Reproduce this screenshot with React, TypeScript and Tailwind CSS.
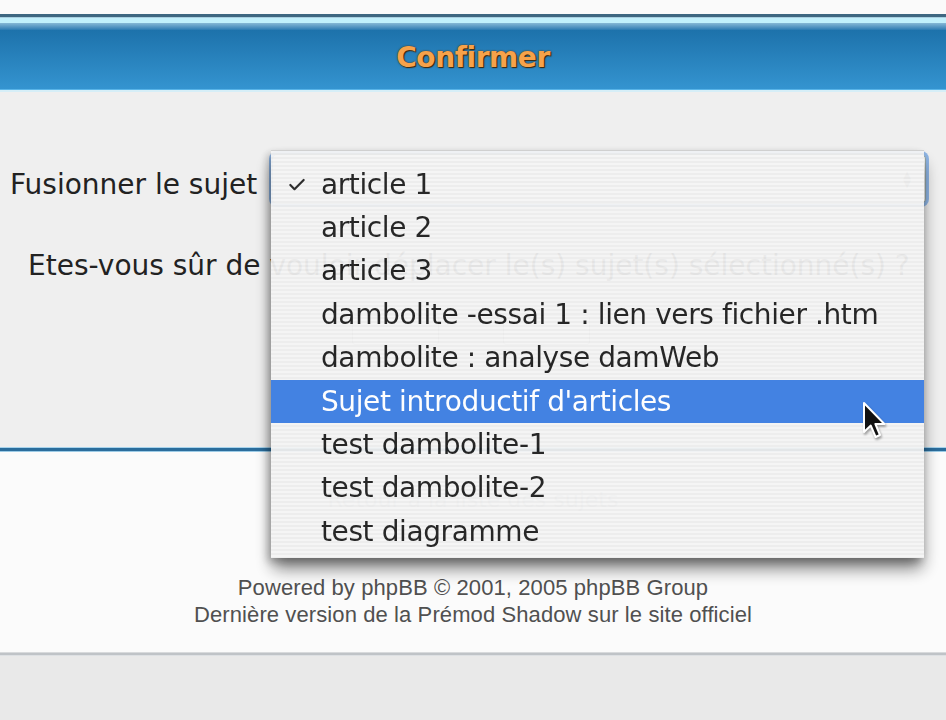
import { Check } from 'lucide-react'

const topics = [
  'article 1',
  'article 2',
  'article 3',
  'dambolite -essai 1 : lien vers fichier .htm',
  'dambolite : analyse damWeb',
  "Sujet introductif d'articles",
  'test dambolite-1',
  'test dambolite-2',
  'test diagramme',
]

function Cursor() {
  return (
    <svg width="26" height="40" viewBox="0 0 13 20" className="drop-shadow-[1px_2px_1px_rgba(0,0,0,0.35)]">
      <path
        d="M1 1 L1 15.5 L4.4 12.3 L6.8 18 L9 17 L6.7 11.5 L11.2 11.5 Z"
        fill="#111"
        stroke="#fff"
        strokeWidth="1"
        strokeLinejoin="round"
      />
    </svg>
  )
}

export default function App() {
  return (
    <div className="relative w-[946px] h-[720px] overflow-hidden flex flex-col bg-[#e9e9e9] font-['DejaVu_Sans',sans-serif]">
      {/* top chrome */}
      <div className="h-[14px] bg-[#fafafa]" />
      <div className="h-[3px] bg-[#3e6781]" />
      <div className="h-[1px] bg-[#a9cfe0]" />
      <div className="h-[5px] bg-[#c2f0fc]" />
      <div className="h-[7px] bg-gradient-to-b from-[#86b8d6] to-[#2a7ab2]" />
      <div className="h-[59px] pb-[4px] flex items-center justify-center bg-gradient-to-b from-[#1d72ab] to-[#3494d0]">
        <span className="text-[28px] font-bold tracking-[-0.4px] text-[#f6a24a] [text-shadow:0_0_2px_#4a3010,1px_1px_1px_#3a2408]">
          Confirmer
        </span>
      </div>
      <div className="h-[1px] bg-[#58b4e8]" />
      <div className="h-[2px] bg-[#d6eef7]" />

      {/* form body */}
      <div className="h-[355px] bg-[#efefef] text-[28px] text-[#222]">
        <div className="mt-[62px] h-[50px] flex items-center">
          <span className="pl-[10px] pt-[12px] w-[272px] leading-none">Fusionner le sujet</span>
          <div className="w-[654px] h-[50px] rounded-[5px] bg-white border border-[#9aa] ring-[3px] ring-[#8fb6e6] flex items-center justify-end pr-[14px]">
            <div className="flex flex-col text-[10px] leading-[9px] text-[#888]">
              <span>▲</span>
              <span>▼</span>
            </div>
          </div>
        </div>
        <div className="mt-[45px] h-[34px] leading-[34px] pl-[28px] whitespace-nowrap">
          Etes-vous sûr de vouloir déplacer le(s) sujet(s) sélectionné(s) ?
        </div>
        <div className="mt-[32px] flex gap-[64px] pl-[352px]">
          <div className="w-[87px] h-[30px] border border-[#aaa] rounded-[3px] bg-[#fafafa]" />
          <div className="w-[87px] h-[30px] border border-[#aaa] rounded-[3px] bg-[#fafafa]" />
        </div>
      </div>

      <div className="h-[1px] bg-[#a7d3ec]" />
      <div className="h-[3px] bg-[#2b6d9c]" />
      <div className="h-[1px] bg-[#9ccbe6]" />

      {/* footer */}
      <div className="h-[200px] bg-[#fbfbfb] flex flex-col items-center">
        <div className="mt-[34px] h-[28px] leading-[28px] text-[22px] text-[#b4bcc4]">Retour à la liste des sujets</div>
        <div className="mt-[60px] font-['Liberation_Sans',Arial,sans-serif] text-[22px] leading-[27px] tracking-[0.1px] text-[#505050] text-center">
          <div>Powered by phpBB © 2001, 2005 phpBB Group</div>
          <div>Dernière version de la Prémod Shadow sur le site officiel</div>
        </div>
      </div>

      <div className="h-[1px] bg-[#d8dadc]" />
      <div className="h-[2px] bg-[#bfc3c7]" />
      <div className="h-[1px] bg-[#dde0e3]" />
      <div className="flex-1 bg-[#e9e9e9]" />

      {/* open select menu */}
      <div className="absolute left-[271px] top-[150px] w-[653px] h-[408px] pt-[12px] bg-[repeating-linear-gradient(to_bottom,#f5f5f5_0px,#f5f5f5_2px,#ededed_2px,#ededed_4px)] opacity-[0.95] border-t border-[#cfcfcf] shadow-[0_12px_16px_-2px_rgba(0,0,0,0.55),-3px_4px_8px_rgba(0,0,0,0.25)]">
        {topics.map((t, i) => {
          const active = i === 5
          return (
            <div
              key={t}
              className={
                'h-[43.4px] flex items-center text-[28px] tracking-[-0.4px] whitespace-nowrap ' +
                (active ? 'bg-[#3a7de2] text-white' : 'text-[#1c1c1c]')
              }
            >
              <span className="w-[50px] flex justify-center pl-[1px]">
                {i === 0 && <Check size={20} strokeWidth={2.6} className="text-[#222]" />}
              </span>
              <span>{t}</span>
            </div>
          )
        })}
      </div>

      <div className="absolute left-[862px] top-[401px]">
        <Cursor />
      </div>
    </div>
  )
}
